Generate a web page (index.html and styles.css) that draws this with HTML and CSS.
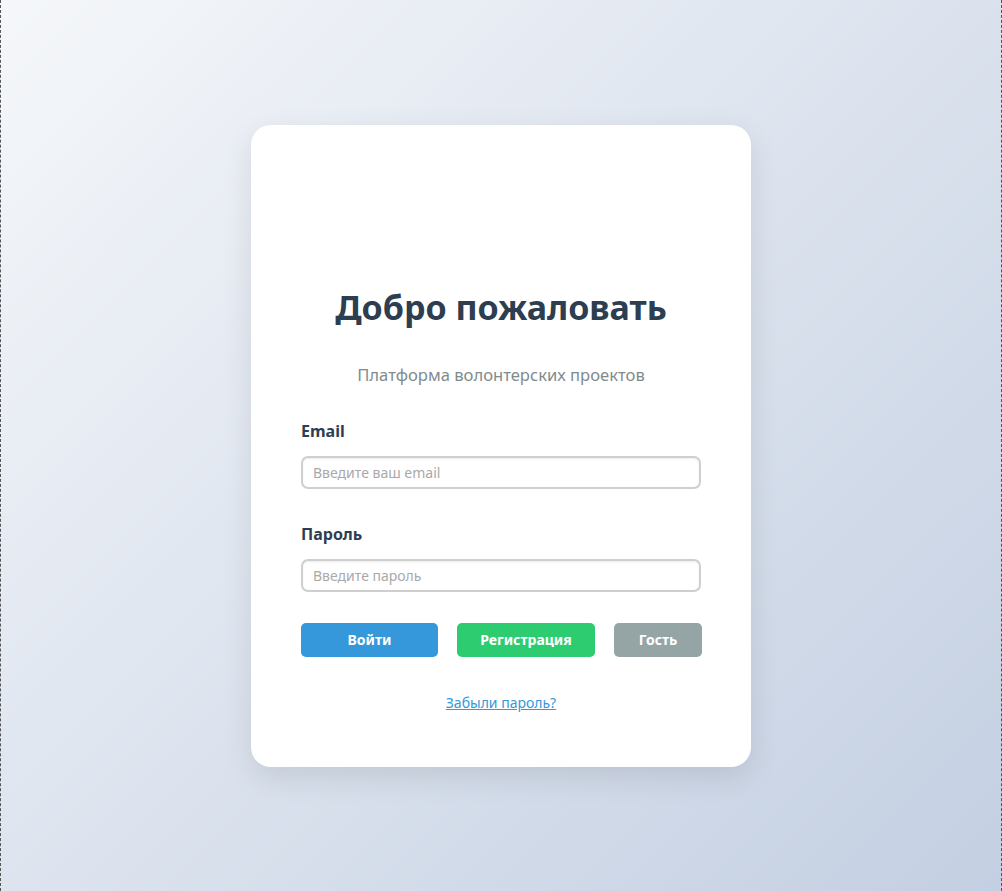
FILE: index.html
```html
<!DOCTYPE html>
<html lang="ru">
<head>
<meta charset="utf-8">
<title>Вход</title>
<link rel="stylesheet" href="styles.css">
</head>
<body>
<div class="page">
  <div class="card">
    <div class="logo-space"></div>
    <h1 class="title">Добро пожаловать</h1>
    <p class="subtitle">Платформа волонтерских проектов</p>
    <div class="field field-first">
      <label class="label" for="email">Email</label>
      <input class="input" id="email" type="email" placeholder="Введите ваш email">
    </div>
    <div class="field">
      <label class="label" for="pass">Пароль</label>
      <input class="input" id="pass" type="password" placeholder="Введите пароль">
    </div>
    <div class="buttons">
      <button class="btn btn-login">Войти</button>
      <button class="btn btn-register">Регистрация</button>
      <button class="btn btn-guest">Гость</button>
    </div>
    <div class="forgot"><a href="#" class="forgot-link">Забыли пароль?</a></div>
  </div>
</div>
</body>
</html>
```
FILE: styles.css
```css
* { box-sizing: border-box; }
html, body { margin: 0; padding: 0; height: 100%; }
body {
  font-family: "Noto Sans", "Open Sans", sans-serif;
  background: linear-gradient(135deg, #f5f7fa 0%, #c3cfe2 100%);
}
.page {
  height: 891px;
  display: flex;
  align-items: center;
  justify-content: center;
  border-left: 1px dashed #555;
  border-right: 1px dashed #555;
}
.card {
  width: 500px;
  height: 642px;
  background: #fff;
  border-radius: 20px;
  box-shadow: 0 10px 30px rgba(0, 0, 0, 0.1);
  padding: 50px;
  display: flex;
  flex-direction: column;
}
.logo-space { height: 111px; flex: none; }
.title {
  margin: 0;
  font-size: 34px;
  line-height: 43px;
  font-weight: 700;
  color: #2c3e50;
  text-align: center;
}
.subtitle {
  margin: 34px 0 0;
  font-size: 16.6px;
  line-height: 24px;
  color: #7f8c8d;
  text-align: center;
}
.field { display: flex; flex-direction: column; margin-top: 33px; }
.field-first { margin-top: 32px; }
.label {
  font-size: 16px;
  line-height: 24px;
  font-weight: 700;
  color: #2c3e50;
  margin-bottom: 13px;
}
.input {
  width: 400px;
  height: 33px;
  border: 2px solid #cfcfcf;
  border-radius: 7px;
  padding: 0 10px;
  font-family: inherit;
  font-size: 14px;
  color: #333;
  box-shadow: inset 0 1px 2px rgba(0,0,0,0.08);
  outline: none;
}
.input::placeholder { color: #a9a9a9; }
.buttons {
  display: grid;
  grid-template-columns: 137px 138px 88px;
  column-gap: 19px;
  margin-top: 31px;
}
.btn {
  height: 34px;
  border: none;
  border-radius: 5px;
  color: #fff;
  font-family: inherit;
  font-size: 14px;
  font-weight: 700;
  cursor: pointer;
}
.btn-login { background: #3498db; }
.btn-register { background: #2ecc71; }
.btn-guest { background: #95a5a6; }
.forgot {
  margin-top: 35px;
  text-align: center;
  line-height: 21px;
}
.forgot-link {
  color: #3498db;
  font-size: 14px;
  text-decoration: underline;
}
```
